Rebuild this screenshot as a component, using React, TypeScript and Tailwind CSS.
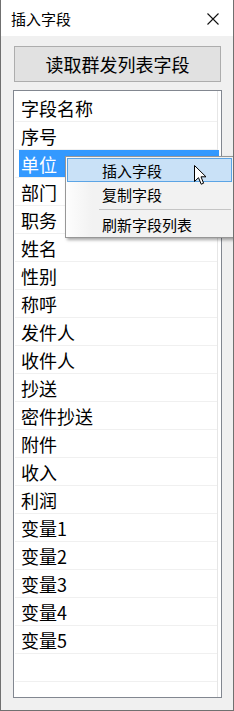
import React from 'react';

const fields = [
  '字段名称', '序号', '单位', '部门', '职务', '姓名', '性别', '称呼',
  '发件人', '收件人', '抄送', '密件抄送', '附件', '收入', '利润',
  '变量1', '变量2', '变量3', '变量4', '变量5', '', '',
];

export default function App() {
  const selected = 2;

  return (
    <div
      className="relative w-[234px] h-[711px] flex flex-col bg-[#f0f0f0] border-x border-b border-[#707070] overflow-hidden text-black"
      style={{ fontFamily: '"Noto Sans CJK SC", "Noto Sans", sans-serif' }}
    >
      {/* Title bar */}
      <div className="h-[36px] shrink-0 bg-white flex items-center justify-between pl-[10px] pr-[14px]">
        <span className="text-[15px] leading-none">插入字段</span>
        <svg width="12" height="12" viewBox="0 0 12 12" className="mt-[2px]">
          <path d="M0.5 0.5 L11.5 11.5 M11.5 0.5 L0.5 11.5" stroke="#111" strokeWidth="1.1" fill="none" />
        </svg>
      </div>

      {/* Body */}
      <div className="flex-1 flex flex-col pl-[12px] pt-[10px]">
        <button className="ml-[1px] w-[207px] h-[36px] bg-[#e1e1e1] border border-[#adadad] text-[18px] leading-none flex items-center justify-center pb-[1px]">
          读取群发列表字段
        </button>

        <div className="mt-[8px] w-[209px] h-[608px] bg-white border border-[#828790] flex overflow-hidden">
          <div className="ml-[1px] w-[202px] pt-[3px] flex flex-col">
            {fields.map((f, i) => (
              <div key={i} className="h-[28px] shrink-0 border-b border-[#f0f0f0] flex">
                <div
                  className={`relative z-10 ml-[4px] mr-[-2px] flex-1 flex items-center pl-[2px] text-[18px] leading-none ${
                    i === selected ? 'bg-[#3399ff] text-white' : ''
                  }`}
                >
                  {f}
                </div>
              </div>
            ))}
          </div>
          <div className="w-px bg-[#e6e6e6]" />
        </div>
      </div>

      {/* Context menu */}
      <div className="absolute z-30 left-[64px] top-[156px] w-[169px] bg-[#f2f2f2] border border-[#979797] shadow-[2px_2px_3px_rgba(0,0,0,0.35)] py-[1px] px-[1px] flex flex-col text-[15px] leading-none">
        <div className="absolute left-0 top-0 bottom-0 w-[26px] bg-gradient-to-r from-[#fdfdfd] to-[#f2f2f2]" />
        <div className="relative h-[24px] flex items-center pl-[34px] bg-[#c9e1f7] border border-[#5ba4e5]">
          插入字段
        </div>
        <div className="relative h-[24px] flex items-center pl-[35px]">复制字段</div>
        <div className="relative h-[6px] flex items-center pl-[32px]">
          <div className="flex-1 h-px bg-[#c5c5c5] mr-[1px]" />
        </div>
        <div className="relative h-[24px] flex items-center pl-[35px]">刷新字段列表</div>
      </div>

      {/* Mouse cursor */}
      <svg className="absolute left-[193px] top-[165px] z-40" width="13" height="21" viewBox="0 0 13 21">
        <path
          d="M0.5 0.5 L0.5 16.5 L4.5 12.7 L7.2 19.2 L9.6 18.2 L7 11.8 L12 11.8 Z"
          fill="white"
          stroke="black"
          strokeWidth="1"
          strokeLinejoin="miter"
        />
      </svg>
    </div>
  );
}
